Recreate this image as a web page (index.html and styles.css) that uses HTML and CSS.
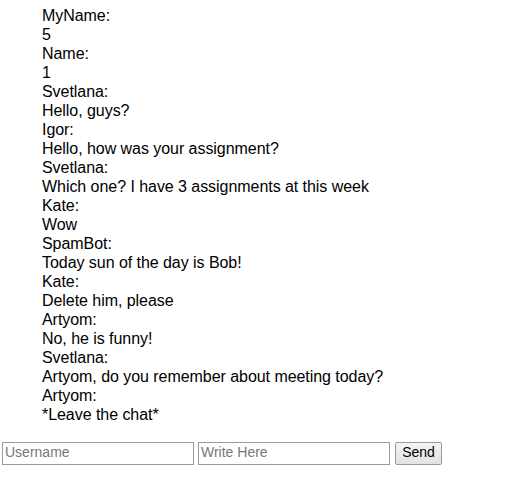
FILE: index.html
```html
<!DOCTYPE html>
<html>
<head>
<meta charset="utf-8">
<link rel="stylesheet" href="styles.css">
</head>
<body>
<div class="chat">
<div>MyName:</div>
<div>5</div>
<div>Name:</div>
<div>1</div>
<div>Svetlana:</div>
<div>Hello, guys?</div>
<div>Igor:</div>
<div>Hello, how was your assignment?</div>
<div>Svetlana:</div>
<div>Which one? I have 3 assignments at this week</div>
<div>Kate:</div>
<div>Wow</div>
<div>SpamBot:</div>
<div>Today sun of the day is Bob!</div>
<div>Kate:</div>
<div>Delete him, please</div>
<div>Artyom:</div>
<div>No, he is funny!</div>
<div>Svetlana:</div>
<div>Artyom, do you remember about meeting today?</div>
<div>Artyom:</div>
<div>*Leave the chat*</div>
</div>
<form class="bar">
<input class="field" type="text" placeholder="Username">
<input class="field" type="text" placeholder="Write Here">
<button class="send" type="button">Send</button>
</form>
</body>
</html>
```
FILE: styles.css
```css
body {
  margin: 0;
  font-family: "Liberation Sans", Arial, sans-serif;
  color: #000;
  background: #fff;
}
.chat {
  padding: 6px 0 0 42px;
  font-size: 16px;
  line-height: 19px;
  letter-spacing: -0.05px;
}
.bar {
  display: flex;
  align-items: center;
  gap: 4px;
  margin: 18px 0 0 2px;
}
.field {
  box-sizing: border-box;
  width: 192px;
  height: 23px;
  margin: 0;
  padding: 0 2px 4px;
  border: 1px solid #9a9a9a;
  font-family: "Liberation Sans", Arial, sans-serif;
  font-size: 14px;
  background: #fff;
}
.field::placeholder {
  color: #777;
}
.send {
  box-sizing: border-box;
  height: 23px;
  width: 47px;
  margin: 0 0 0 1px;
  padding: 0 6px 4px;
  border: 1px solid #9a9a9a;
  border-radius: 2px;
  background: linear-gradient(#f4f4f4, #e2e2e2);
  font-family: "Liberation Sans", Arial, sans-serif;
  font-size: 14px;
  color: #000;
}
```
